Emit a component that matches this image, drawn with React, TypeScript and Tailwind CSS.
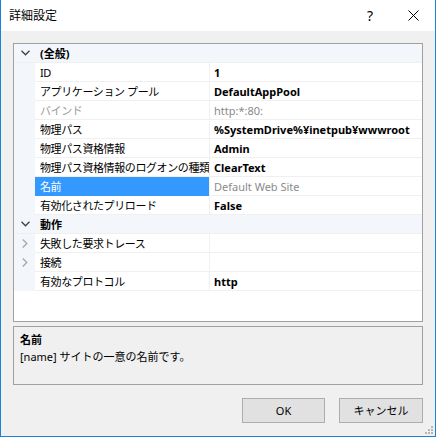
import React from "react";

type Row = {
  kind: "cat" | "prop";
  name: string;
  value?: string;
  expander?: "down" | "right";
  nameGray?: boolean;
  valueStyle?: "bold" | "gray" | "normal";
  selected?: boolean;
};

const rows: Row[] = [
  { kind: "cat", name: "(全般)", expander: "down" },
  { kind: "prop", name: "ID", value: "1", valueStyle: "bold" },
  { kind: "prop", name: "アプリケーション プール", value: "DefaultAppPool", valueStyle: "bold" },
  { kind: "prop", name: "バインド", value: "http:*:80:", valueStyle: "gray", nameGray: true },
  { kind: "prop", name: "物理パス", value: "%SystemDrive%¥inetpub¥wwwroot", valueStyle: "bold" },
  { kind: "prop", name: "物理パス資格情報", value: "Admin", valueStyle: "bold" },
  { kind: "prop", name: "物理パス資格情報のログオンの種類", value: "ClearText", valueStyle: "bold" },
  { kind: "prop", name: "名前", value: "Default Web Site", valueStyle: "gray", selected: true },
  { kind: "prop", name: "有効化されたプリロード", value: "False", valueStyle: "bold" },
  { kind: "cat", name: "動作", expander: "down" },
  { kind: "prop", name: "失敗した要求トレース", value: "", expander: "right" },
  { kind: "prop", name: "接続", value: "", expander: "right" },
  { kind: "prop", name: "有効なプロトコル", value: "http", valueStyle: "bold" },
];

function Chevron({ dir }: { dir: "down" | "right" }) {
  if (dir === "down") {
    return (
      <svg width="9" height="6" viewBox="0 0 9 6" className="block">
        <path d="M0.5 0.8 L4.5 4.8 L8.5 0.8" fill="none" stroke="#404040" strokeWidth="1.3" />
      </svg>
    );
  }
  return (
    <svg width="6" height="9" viewBox="0 0 6 9" className="block">
      <path d="M0.8 0.5 L4.8 4.5 L0.8 8.5" fill="none" stroke="#a6a6a6" strokeWidth="1.3" />
    </svg>
  );
}

function GridRow({ row }: { row: Row }) {
  if (row.kind === "cat") {
    return (
      <div className="flex h-[19px] bg-[#f3f6fb] border-b border-[#f0f0f0]">
        <div className="w-[21px] flex items-center justify-center pl-[1px]">
          <Chevron dir="down" />
        </div>
        <div className="pl-[5px] flex items-center font-bold text-[#000]">{row.name}</div>
      </div>
    );
  }
  return (
    <div className="flex h-[19px]">
      <div className="w-[21px] bg-[#f3f6fb] flex items-center justify-center">
        {row.expander && <Chevron dir={row.expander} />}
      </div>
      <div
        className={`w-[175px] shrink-0 flex items-center pl-[5px] tracking-[-0.4px] border-r border-[#f0f0f0] whitespace-nowrap overflow-hidden ${
          row.selected
            ? "bg-[#3399ff] text-white"
            : row.nameGray
            ? "text-[#9a9a9a] border-b border-b-[#f0f0f0]"
            : "text-black border-b border-b-[#f0f0f0]"
        }`}
      >
        {row.name}
      </div>
      <div
        className={`flex-1 min-w-0 flex items-center pl-[4px] border-b border-[#f0f0f0] whitespace-nowrap overflow-hidden ${
          row.valueStyle === "bold"
            ? "font-bold text-black"
            : row.valueStyle === "gray"
            ? "text-[#8a8a8a]"
            : "text-black"
        }`}
      >
        {row.value}
      </div>
    </div>
  );
}

export default function App() {
  return (
    <div className="w-[436px] h-[437px] bg-[#f0f0f0] border-x border-b border-[#1883d7] flex flex-col font-['Noto_Sans','Noto_Sans_CJK_JP',sans-serif] text-[11px] leading-none text-black">
      {/* title bar */}
      <div className="h-[31px] bg-white flex items-center pl-[8px] shrink-0">
        <span className="text-[12px]">詳細設定</span>
        <span className="ml-auto mr-[35px] text-[14px]">?</span>
        <svg width="11" height="11" viewBox="0 0 11 11" className="mr-[16px]">
          <path d="M0.5 0.5 L10.5 10.5 M10.5 0.5 L0.5 10.5" stroke="#000" strokeWidth="1" />
        </svg>
      </div>

      {/* property grid */}
      <div className="mt-[12px] mx-[12px] h-[279px] border border-[#a0a0a0] bg-white flex flex-col">
        {rows.map((r, i) => (
          <GridRow key={i} row={r} />
        ))}
      </div>

      {/* description */}
      <div className="mt-[4px] mx-[12px] h-[59px] border border-[#a0a0a0] px-[6px] pt-[7px]">
        <div className="font-bold">名前</div>
        <div className="mt-[6px]">[name] サイトの一意の名前です。</div>
      </div>

      {/* buttons */}
      <div className="mt-[13px] mr-[12px] flex justify-end gap-[14px]">
        <button className="w-[83px] h-[25px] bg-[#e1e1e1] border border-[#adadad]">OK</button>
        <button className="w-[84px] h-[25px] bg-[#e1e1e1] border border-[#adadad]">キャンセル</button>
      </div>

      {/* resize grip */}
      <div className="mt-auto self-end mr-[2px] mb-[2px]">
        <svg width="8" height="8" viewBox="0 0 8 8" className="block">
          <rect x="6" y="0" width="2" height="2" fill="#b8b8b8" />
          <rect x="3" y="3" width="2" height="2" fill="#b8b8b8" />
          <rect x="6" y="3" width="2" height="2" fill="#b8b8b8" />
          <rect x="0" y="6" width="2" height="2" fill="#b8b8b8" />
          <rect x="3" y="6" width="2" height="2" fill="#b8b8b8" />
          <rect x="6" y="6" width="2" height="2" fill="#b8b8b8" />
        </svg>
      </div>
    </div>
  );
}
